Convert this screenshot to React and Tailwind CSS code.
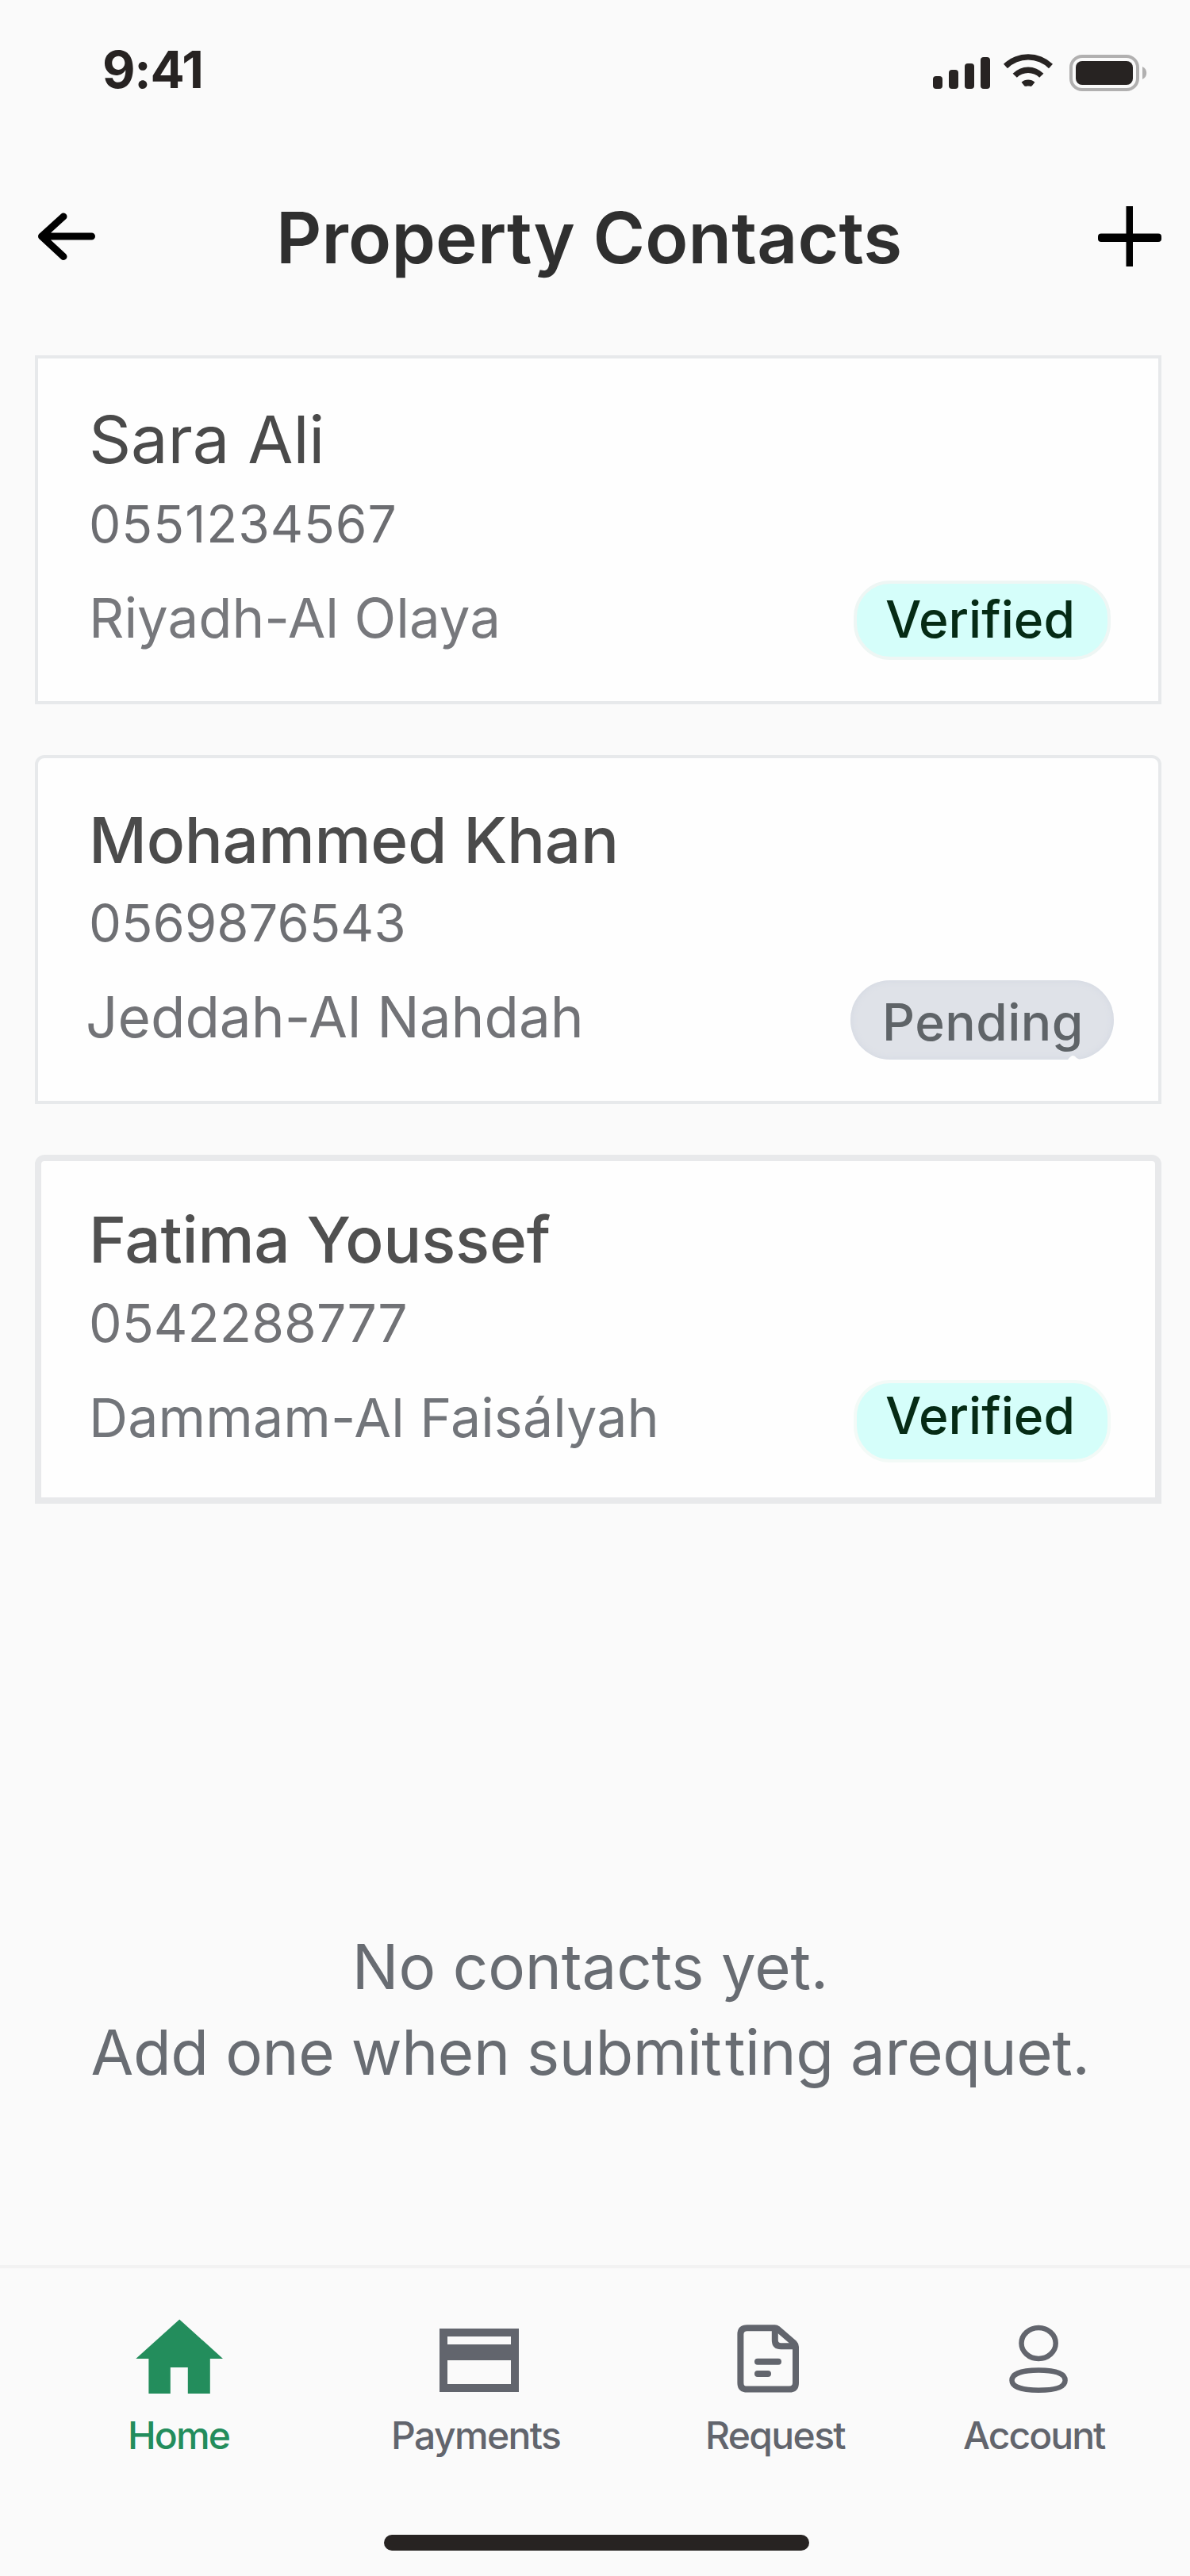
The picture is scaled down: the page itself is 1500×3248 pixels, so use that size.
const contacts = [
  {
    name: "Sara Ali",
    phone: "0551234567",
    location: "Riyadh-Al Olaya",
    status: "Verified",
    card: "border-4 border-[#e7e9eb] pl-[64px] pr-[60px] pt-[52px]",
    nameClass: "text-[83px] font-normal tracking-[-0.15px] text-[#4a4a4a]",
    phoneClass: "mt-[17px] text-[64px] tracking-[0.98px] text-[#6c6d71]",
    rowClass: "mt-[31px]",
    locationClass: "text-[69px] leading-[94px] text-[#77787c]",
    badgeClass:
      "h-[100px] w-[324px] rounded-[46px] border-4 border-[#eef6f4] bg-[#d5fefa] pl-[36px] leading-[90px] text-[#052b15]",
  },
  {
    name: "Mohammed Khan",
    phone: "0569876543",
    location: "Jeddah-Al Nahdah",
    status: "Pending",
    card: "rounded-t-[12px] border-4 border-[#e7e9eb] pl-[64px] pr-[56px] pt-[53px]",
    nameClass: "text-[80px] font-medium tracking-[-0.28px] text-[#4b4b4b]",
    phoneClass: "mt-[15px] text-[65px] tracking-[0.05px] text-[#6e6f73]",
    rowClass: "mt-[32px]",
    locationClass: "-ml-1 text-[71px] leading-[92px] text-[#727377]",
    notch: true,
    badgeClass:
      "h-[100px] w-[332px] rounded-[50px] bg-[#dfe2e8] pl-[40px] leading-[105px] tracking-[0.48px] text-[#5f6468] shadow-[inset_0_0_10px_#d3d8e2]",
  },
  {
    name: "Fatima Youssef",
    phone: "0542288777",
    location: "Dammam-Al Faisályah",
    status: "Verified",
    card: "rounded-t-[12px] border-8 border-[#e8e9eb] pl-[60px] pr-[56px] pt-[49px]",
    nameClass: "text-[80px] font-medium tracking-[-0.2px] text-[#505050]",
    phoneClass: "mt-[15px] text-[66px] tracking-[0.05px] text-[#717276]",
    rowClass: "mt-[32px]",
    locationClass: "text-[68px] leading-[95px] tracking-[0.16px] text-[#72757a]",
    badgeClass:
      "h-[104px] w-[324px] rounded-[46px] border-4 border-[#f3faf7] bg-[#d5fefa] pl-[36px] leading-[81px] text-[#052b15]",
  },
];

function SignalIcon() {
  return (
    <svg className="h-[48px] w-[72px]" viewBox="0 0 72 48" fill="#272322">
      <rect x="0" y="28" width="12" height="16" rx="4" />
      <rect x="20" y="20" width="12" height="24" rx="4" />
      <rect x="40" y="12" width="12" height="32" rx="4" />
      <rect x="60" y="4" width="12" height="40" rx="4" />
    </svg>
  );
}

function WifiIcon() {
  return (
    <svg className="ml-[17px] h-[48px] w-[62px]" viewBox="0 0 62 48" fill="#272322">
      <path d="M0 12.8A44.7 44.7 0 0 1 62 12.8L57 18.2A37 37 0 0 0 5 18.2Z" />
      <path d="M11.6 24.8A27 27 0 0 1 50.4 24.8L45.2 29.8A20 20 0 0 0 16.8 29.8Z" />
      <path d="M22.6 35.8A12.4 12.4 0 0 1 39.4 35.8L35.6 40.6L33.5 41L32.6 40.4H29.4L28.5 41L26.4 40.6Z" />
    </svg>
  );
}

function BatteryIcon() {
  return (
    <svg className="ml-[21px] h-[48px] w-[98px]" viewBox="0 0 98 48">
      <rect x="2" y="3" width="84" height="42" rx="14" fill="none" stroke="#b1b0b0" strokeWidth="4" />
      <rect x="8" y="9" width="72" height="30" rx="8" fill="#272322" />
      <path d="M92 16V32C95.500 30.500 97.200 27.500 97.200 24S95.500 17.500 92 16Z" fill="#b1b0b0" />
    </svg>
  );
}

function BackIcon() {
  return (
    <svg
      className="ml-[48px] h-[64px] w-[74px]"
      viewBox="0 0 74 64"
      fill="none"
      stroke="#000"
      strokeWidth="9"
      strokeLinecap="round"
      strokeLinejoin="round"
    >
      <path d="M4.500 30H67.500M32 5L4.500 30L32 55.500" />
    </svg>
  );
}

function PlusIcon() {
  return (
    <svg className="mr-[36px] h-[80px] w-[80px]" viewBox="0 0 80 80" fill="#000">
      <rect x="0" y="34.500" width="80" height="10.500" rx="4" />
      <rect x="35.500" y="0" width="8.500" height="76" />
    </svg>
  );
}

function HomeIcon() {
  return (
    <svg className="ml-[10px] h-[100px] w-[112px]" viewBox="0 0 112 100" fill="#238d5c">
      <path d="M55.200 4.500L110 54H93.800V98H65.800V65H43.800V98H16.400V54H0.300Z" />
    </svg>
  );
}

function PaymentsIcon() {
  return (
    <svg className="ml-[61px] h-[100px] w-[100px]" viewBox="0 0 100 100" fill="#62656d">
      <path fillRule="evenodd" d="M0 16H100V96H0ZM10 26V36H90V26ZM10 56V86H90V56Z" />
    </svg>
  );
}

function RequestIcon() {
  return (
    <svg
      className="ml-[40px] h-[100px] w-[80px]"
      viewBox="0 0 80 100"
      fill="none"
      stroke="#62656d"
      strokeWidth="8"
      strokeLinejoin="round"
      strokeLinecap="round"
    >
      <path d="M13 15.300H47.500Q49.500 15.300 51.500 16.800L72 34.500Q74 36.500 74 39V84.500Q74 92.600 66 92.600H13Q4.400 92.600 4.400 84.500V23.500Q4.400 15.300 13 15.300Z" />
      <path d="M47.800 16V30.500Q47.800 38.300 55.500 38.300H73" />
      <path d="M26 57.800H52M26 73.100H39" />
    </svg>
  );
}

function AccountIcon() {
  return (
    <svg
      className="ml-[58px] h-[100px] w-[76px]"
      viewBox="0 0 76 100"
      fill="none"
      stroke="#62656d"
      strokeWidth="6.5"
    >
      <ellipse cx="37.100" cy="34.500" rx="21.600" ry="19.400" />
      <path d="M37.100 68.400C55 68.400 70.600 71.500 70.600 81.200S55 93.700 37.100 93.700S3.500 90.500 3.500 81.200S19.200 68.400 37.100 68.400Z" />
    </svg>
  );
}

const tabs = [
  { label: "Home", Icon: HomeIcon, width: "w-[332px]", text: "text-[#238d5c] tracking-[-1.9px]" },
  { label: "Payments", Icon: PaymentsIcon, width: "w-[396px]", text: "text-[#62656d] tracking-[-1.6px]" },
  { label: "Request", Icon: RequestIcon, width: "w-[325px]", text: "text-[#62656d] tracking-[-1.65px]" },
  { label: "Account", Icon: AccountIcon, width: "w-[200px]", text: "text-[#62656d] tracking-[-1.95px]" },
];

function ContactCard({ contact }) {
  return (
    <article className={`h-[440px] bg-[#fefefe] ${contact.card}`}>
      <h2 className={`leading-[100px] ${contact.nameClass}`}>{contact.name}</h2>
      <p className={`leading-[80px] ${contact.phoneClass}`}>{contact.phone}</p>
      <div className={`flex items-start justify-between ${contact.rowClass}`}>
        <p className={contact.locationClass}>{contact.location}</p>
        <span className={`relative block shrink-0 text-[64px] font-medium ${contact.badgeClass}`}>
          {contact.status}
          {contact.notch && (
            <svg className="absolute bottom-0 left-[274px] h-[6px] w-[18px]" viewBox="0 0 18 6" fill="#fefefe">
              <path d="M0 6Q4 1 6.500 1Q9 1 11 4L15 6Z" />
            </svg>
          )}
        </span>
      </div>
    </article>
  );
}

export default function App() {
  return (
    <div className="flex h-[3248px] w-[1500px] flex-col overflow-hidden bg-[#fafafa] font-['Inter',sans-serif]">
      <div className="flex h-[176px] items-start justify-between pl-[129px] pr-[54px] pt-[48px]">
        <span className="text-[64px] font-bold leading-[80px] tracking-[-1.2px] text-[#272322]">9:41</span>
        <div className="mt-[20px] flex">
          <SignalIcon />
          <WifiIcon />
          <BatteryIcon />
        </div>
      </div>

      <header className="flex h-[248px] items-center">
        <BackIcon />
        <h1 className="ml-[226px] flex-1 text-[89px] font-semibold leading-[120px] tracking-[0.15px] text-[#2f2f2f]">
          Property Contacts
        </h1>
        <PlusIcon />
      </header>

      <main className="flex flex-1 flex-col pt-[24px]">
        <div className="ml-[44px] flex w-[1420px] flex-col gap-[64px]">
          {contacts.map((contact) => (
            <ContactCard key={contact.phone} contact={contact} />
          ))}
        </div>
        <div className="mt-[530px] w-[1488px] text-center text-[78px] leading-[108px] tracking-[-0.15px] text-[#686c72]">
          <p>No contacts yet.</p>
          <p className="tracking-[-0.42px]">
            Add one when submit<span className="-ml-[0.42px] pl-[5px]">ting arequet.</span>
          </p>
        </div>
      </main>

      <nav className="flex h-[340px] shrink-0 border-t-4 border-[#f2f2f2] pl-[161px] pt-[60px]">
        {tabs.map(({ label, Icon, width, text }) => (
          <div key={label} className={`shrink-0 ${width}`}>
            <Icon />
            <p className={`mt-[20px] text-[48px] font-medium leading-[61px] ${text}`}>{label}</p>
          </div>
        ))}
      </nav>
      <div className="mb-[32px] ml-[484px] h-[20px] w-[536px] shrink-0 rounded-full bg-[#272322]" />
    </div>
  );
}
